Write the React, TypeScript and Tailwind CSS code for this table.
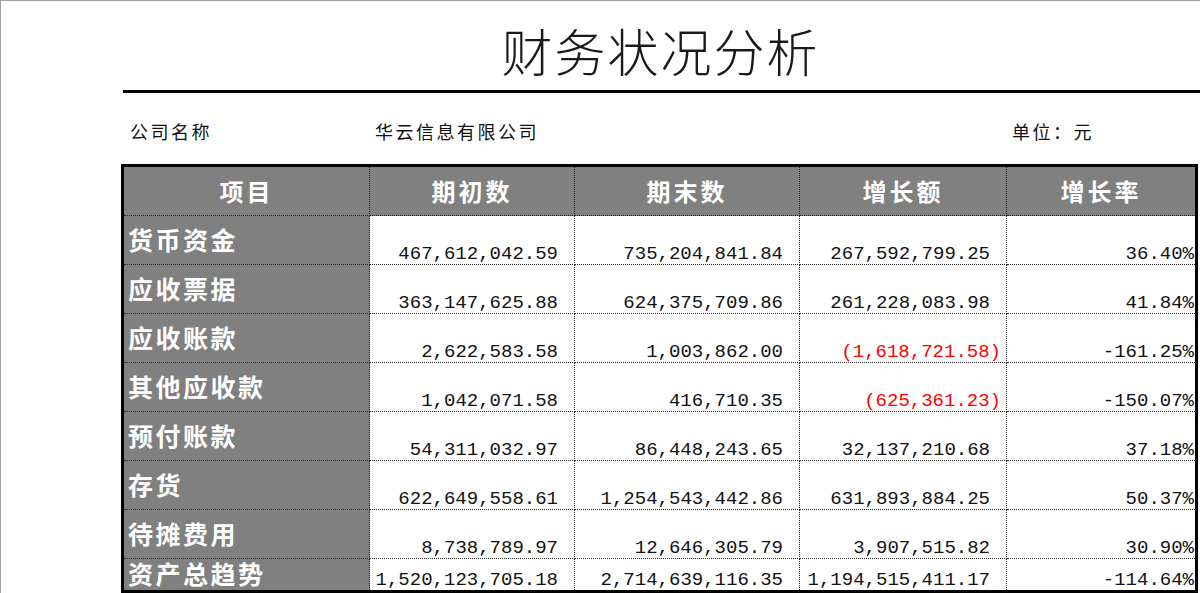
const rows = [
  { label: "货币资金", a: "467,612,042.59", b: "735,204,841.84", c: "267,592,799.25", r: "36.40%" },
  { label: "应收票据", a: "363,147,625.88", b: "624,375,709.86", c: "261,228,083.98", r: "41.84%" },
  { label: "应收账款", a: "2,622,583.58", b: "1,003,862.00", c: "(1,618,721.58)", neg: true, r: "-161.25%" },
  { label: "其他应收款", a: "1,042,071.58", b: "416,710.35", c: "(625,361.23)", neg: true, r: "-150.07%" },
  { label: "预付账款", a: "54,311,032.97", b: "86,448,243.65", c: "32,137,210.68", r: "37.18%" },
  { label: "存货", a: "622,649,558.61", b: "1,254,543,442.86", c: "631,893,884.25", r: "50.37%" },
  { label: "待摊费用", a: "8,738,789.97", b: "12,646,305.79", c: "3,907,515.82", r: "30.90%" },
  { label: "资产总趋势", a: "1,520,123,705.18", b: "2,714,639,116.35", c: "1,194,515,411.17", r: "-114.64%" },
];

const cjk = "font-['Noto_Sans_CJK_SC',sans-serif]";
const mono = "font-['Liberation_Mono','Noto_Sans_CJK_SC',monospace]";

const Num = ({ value, neg, last }: { value: string; neg?: boolean; last?: boolean }) => (
  <div
    className={`flex items-end justify-end border-dotted border-[#222] ${last ? "" : "border-b"} border-r ${mono} text-[19px] leading-[19px] ${
      neg ? "pr-[5px] text-[#ff0000]" : "pr-[16px] text-[#111]"
    }`}
  >
    <span className="whitespace-nowrap">{value}</span>
  </div>
);

export default function App() {
  return (
    <div className={`w-[1200px] h-[593px] overflow-hidden bg-white border-t border-l border-[#a0a0a0] ${cjk}`}>
      <div className="ml-[120px] w-[1077px]">
        {/* Title */}
        <div className="pt-[24px] h-[74px] pl-[2px] text-center text-[51px] leading-[50px] font-light tracking-[2px] text-[#1a1a1a]">
          财务状况分析
        </div>
        <div className="mt-[15px] ml-[2px] w-[1077px] h-[3px] bg-black" />

        {/* Company row */}
        <div className="mt-[29px] flex text-[18px] leading-[18px] tracking-[2.5px] text-[#111]">
          <span className="pl-[9px] w-[254px]">公司名称</span>
          <span className="w-[637px]">华云信息有限公司</span>
          <span>单位：元</span>
        </div>

        {/* Table */}
        <div className="mt-[24px] border-[3px] border-black">
          <div className="grid grid-cols-[246px_205px_225px_207px_1fr] grid-rows-[repeat(8,49px)_31px]">
            {["项目", "期初数", "期末数", "增长额", "增长率"].map((h, i) => (
              <div
                key={h}
                className={`flex items-center justify-center bg-[#808080] border-dotted border-[#222] border-b ${
                  i < 4 ? "border-r" : ""
                } text-white text-[24px] leading-none font-bold tracking-[3px]`}
              >
                {h}
              </div>
            ))}
            {rows.map((row, idx) => {
              const last = idx === rows.length - 1;
              return [
                <div
                  key={row.label + "l"}
                  className={`overflow-hidden bg-[#808080] border-dotted border-[#222] border-r ${
                    last ? "pt-[2px]" : "border-b pt-[11px]"
                  } pl-[4px] text-white text-[25px] leading-none font-bold tracking-[2.5px] whitespace-nowrap`}
                >
                  {row.label}
                </div>,
                <Num key={row.label + "a"} value={row.a} last={last} />,
                <Num key={row.label + "b"} value={row.b} last={last} />,
                <Num key={row.label + "c"} value={row.c} neg={row.neg} last={last} />,
                <div
                  key={row.label + "r"}
                  className={`flex items-end justify-end border-dotted border-[#222] ${
                    last ? "" : "border-b"
                  } pr-[1px] ${mono} text-[19px] leading-[19px] text-[#111]`}
                >
                  {row.r}
                </div>,
              ];
            })}
          </div>
        </div>
      </div>
    </div>
  );
}
